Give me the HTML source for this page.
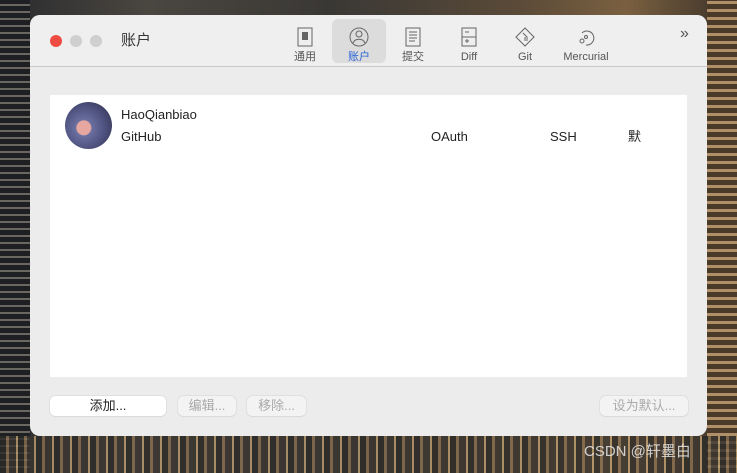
<!DOCTYPE html>
<html><head><meta charset="utf-8"><style>
*{margin:0;padding:0;box-sizing:border-box}
body{width:737px;height:473px;overflow:hidden;position:relative;font-family:"Liberation Sans","Noto Sans CJK SC",sans-serif;
background:linear-gradient(90deg,#2a2b2e 0%,#4a4640 20%,#3a3835 45%,#5a4a38 70%,#7a6040 85%,#3a3128 100%);}
.bg2{position:absolute;left:0;top:436px;width:737px;height:37px;background:repeating-linear-gradient(90deg,#2b2a28 0 6px,#8a7050 6px 9px,#3a3530 9px 16px,#c0a070 16px 18px);opacity:.8}
.bgl{position:absolute;left:0;top:0;width:30px;height:473px;background:repeating-linear-gradient(0deg,#1e1f22 0 5px,#6a6660 5px 7px)}
.bgr{position:absolute;left:707px;top:0;width:30px;height:473px;background:repeating-linear-gradient(0deg,#4a3a2a 0 5px,#b09068 5px 8px)}
.win{position:absolute;left:30px;top:15px;width:677px;height:421px;background:#ececec;border-radius:10px;overflow:hidden}
.tb{height:52px;background:#f0efef;border-bottom:1px solid #c8c8c8;position:relative}
.dot{position:absolute;top:20px;width:12px;height:12px;border-radius:50%}
.title{position:absolute;left:91px;top:17px;font-size:15px;line-height:18px;color:#333}
.tab{position:absolute;top:4px;height:44px;font-size:11px;color:#555}
.tab svg{position:absolute;left:50%;top:8px;transform:translateX(-50%)}
.tab span{position:absolute;left:0;right:0;top:32px;line-height:13px;text-align:center;white-space:nowrap}
.sel{background:#dcdcdc;border-radius:6px;color:#2a64d6}
.list{position:absolute;left:20px;top:80px;width:637px;height:282px;background:#fff}
.t{position:absolute;font-size:13px;line-height:16px;color:#222}
.btn{position:absolute;top:381px;height:20px;border-radius:5px;font-size:13px;text-align:center;line-height:20px;background:#f3f3f3;color:#aaa;box-shadow:0 0 0 .5px #d4d4d4,0 1px 1px #ddd}
</style></head><body>
<div class="bgl"></div><div class="bgr"></div><div class="bg2"></div>
<div class="win">
 <div class="tb">
  <div class="dot" style="left:20px;background:#ee4b42"></div>
  <div class="dot" style="left:40px;background:#cfcfcf"></div>
  <div class="dot" style="left:60px;background:#cfcfcf"></div>
  <div class="title">账户</div>
  <div class="tab" style="left:258px;width:34px"><svg width="16" height="20"><rect x="1" y="1" width="14" height="18" fill="none" stroke="#666"/><rect x="5" y="5" width="6" height="8" fill="#666"/></svg><span>通用</span></div>
  <div class="tab sel" style="left:302px;width:54px"><svg width="20" height="20"><circle cx="10" cy="10" r="9" fill="none" stroke="#666"/><circle cx="10" cy="7" r="3" fill="none" stroke="#666"/><path d="M4 16c2-5 10-5 12 0" fill="none" stroke="#666"/></svg><span>账户</span></div>
  <div class="tab" style="left:366px;width:34px"><svg width="16" height="20"><rect x="1" y="1" width="14" height="18" fill="none" stroke="#666"/><path d="M4 5h8M4 8h8M4 11h8M4 14h6" stroke="#666"/></svg><span>提交</span></div>
  <div class="tab" style="left:422px;width:34px"><svg width="16" height="20"><rect x="1" y="1" width="14" height="18" fill="none" stroke="#666"/><path d="M1 10h14M4 5h4M4 14h4M6 12v4" stroke="#666"/></svg><span>Diff</span></div>
  <div class="tab" style="left:478px;width:34px"><svg width="20" height="20"><path d="M10 1l9 9-9 9-9-9z" fill="none" stroke="#666"/><path d="M8 6l4 4v4M10 10v4" stroke="#666" fill="none"/></svg><span>Git</span></div>
  <div class="tab" style="left:526px;width:60px"><svg width="20" height="20"><path d="M6 6a7 7 0 1 1 4 12" fill="none" stroke="#666"/><circle cx="6" cy="14" r="2" fill="none" stroke="#666"/><circle cx="10" cy="10" r="1.5" fill="none" stroke="#666"/></svg><span>Mercurial</span></div>
  <div style="position:absolute;left:650px;top:10px;font-size:16px;color:#555">»</div>
 </div>
 <div class="list">
  <div style="position:absolute;left:15px;top:7px;width:47px;height:47px;border-radius:50%;background:radial-gradient(circle at 40% 55%,#e6a7a0 0 7px,#6a6fa0 8px,#4a4d78 60%,#2a2a40 100%)"></div>
  <div class="t" style="left:71px;top:12px">HaoQianbiao</div>
  <div class="t" style="left:71px;top:34px">GitHub</div>
  <div class="t" style="left:381px;top:34px">OAuth</div>
  <div class="t" style="left:500px;top:34px">SSH</div>
  <div class="t" style="left:578px;top:34px">默</div>
 </div>
 <div class="btn" style="left:20px;width:116px;background:#fff;color:#222">添加...</div>
 <div class="btn" style="left:148px;width:58px">编辑...</div>
 <div class="btn" style="left:217px;width:59px">移除...</div>
 <div class="btn" style="left:570px;width:88px">设为默认...</div>
</div>
<div style="position:absolute;left:584px;top:443px;font-size:15px;line-height:18px;color:#e8e8e8;opacity:.85">CSDN @轩墨白</div>
</body></html>
